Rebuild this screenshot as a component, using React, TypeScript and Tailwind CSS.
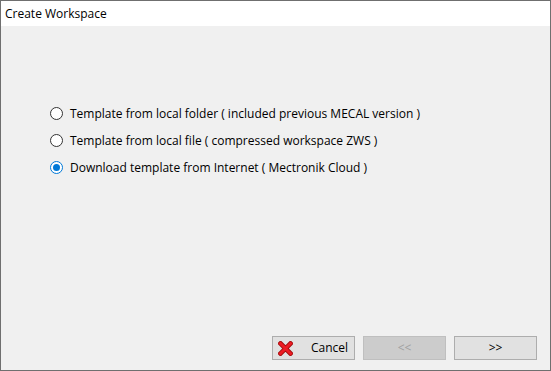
import React from "react";

const options = [
  "Template from local folder ( included previous MECAL version )",
  "Template from local file ( compressed workspace ZWS )",
  "Download template from Internet ( Mectronik Cloud )",
];

const Radio = ({ checked }: { checked: boolean }) => (
  <div
    className={`w-[13px] h-[13px] rounded-full border bg-white flex items-center justify-center shrink-0 ${
      checked ? "border-[#0078d7]" : "border-[#333333]"
    }`}
  >
    {checked && <div className="w-[7px] h-[7px] rounded-full bg-[#0078d7]" />}
  </div>
);

const CancelIcon = () => (
  <svg width="15" height="15" viewBox="0 0 15 15">
    <path d="M2.5 2.5 L12.5 12.5 M12.5 2.5 L2.5 12.5" stroke="#9e0b0b" strokeWidth="4.6" strokeLinecap="square" />
    <path d="M2.5 2.5 L12.5 12.5 M12.5 2.5 L2.5 12.5" stroke="#ec1c24" strokeWidth="3" strokeLinecap="square" />
  </svg>
);

export default function App() {
  const selected = 2;
  return (
    <div
      className="w-[551px] h-[371px] flex flex-col border border-[#6f6f6f] bg-[#f0f0f0] text-[12px] text-black"
      style={{ fontFamily: '"Segoe UI", "Open Sans", "Noto Sans", sans-serif' }}
    >
      <div className="h-[25px] bg-white flex items-center pl-[4px] shrink-0">
        <span className="leading-none">Create Workspace</span>
      </div>

      <div className="flex flex-col gap-[10px] pl-[49px] pt-[79px]">
        {options.map((label, idx) => (
          <div key={idx} className="flex items-center gap-[7px] h-[17px]">
            <Radio checked={idx === selected} />
            <span className="leading-none whitespace-nowrap">{label}</span>
          </div>
        ))}
      </div>

      <div className="flex-1" />

      <div className="flex justify-end gap-[8px] pr-[13px] pb-[10px]">
        <div className="w-[83px] h-[24px] bg-[#e1e1e1] border border-[#adadad] flex items-center pl-[5px]">
          <CancelIcon />
          <span className="ml-[18px]">Cancel</span>
        </div>
        <div className="w-[83px] h-[24px] bg-[#cccccc] border border-[#bfbfbf] flex items-center justify-center text-[#a0a0a0]">
          &lt;&lt;
        </div>
        <div className="w-[83px] h-[24px] bg-[#e1e1e1] border border-[#adadad] flex items-center justify-center">
          &gt;&gt;
        </div>
      </div>
    </div>
  );
}
